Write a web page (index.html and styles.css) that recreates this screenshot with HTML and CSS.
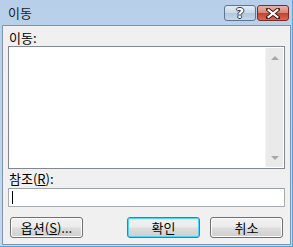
FILE: index.html
```html
<!DOCTYPE html>
<html>

<head>
    <meta charset="utf-8">
    <title>이동</title>
    <link rel="stylesheet" href="styles.css">
</head>

<body>
    <div class="window">
        <div class="titlebar">
            <span class="title">이동</span>
            <div class="caption-buttons">
                <div class="cap-btn help">?</div>
                <div class="cap-btn close">
                    <svg width="14" height="11" viewBox="0 0 14 11">
                        <path d="M2 1.5 L12 9.5 M12 1.5 L2 9.5" stroke="#4a1410" stroke-width="4" stroke-linecap="square" />
                        <path d="M2.6 2 L11.4 9 M11.4 2 L2.6 9" stroke="#ffffff" stroke-width="2.2" stroke-linecap="square" />
                    </svg>
                </div>
            </div>
        </div>
        <div class="client">
            <div class="label first">이동:</div>
            <div class="listbox">
                <div class="scrollbar">
                    <span class="arrow up"></span>
                    <span class="arrow down"></span>
                </div>
            </div>
            <div class="label">참조(<u>R</u>):</div>
            <div class="textbox"><span class="caret"></span></div>
            <div class="buttons">
                <button class="btn">옵션(<u>S</u>)...</button>
                <span class="spacer"></span>
                <button class="btn default">확인</button>
                <button class="btn">취소</button>
            </div>
        </div>
    </div>
</body>

</html>
```

FILE: styles.css
```css
html,
body {
    margin: 0;
    padding: 0;
}

body {
    font-family: "Noto Sans CJK KR", "Noto Sans", sans-serif;
    font-size: 13px;
    color: #000000;
}

.window {
    width: 293px;
    height: 247px;
    box-sizing: border-box;
    padding: 0 1px 1px 2px;
    border-right: 1px solid #4ea6d8;
    border-bottom: 1px solid #4ea6d8;
    background: linear-gradient(#b8cfe9, #c6d9ee);
    display: flex;
    flex-direction: column;
}

.titlebar {
    height: 25px;
    display: flex;
    align-items: flex-start;
}

.title {
    margin: 5px 0 0 6px;
    line-height: 16px;
    font-size: 13px;
    color: #1b1b1b;
}

.caption-buttons {
    margin: 5px 2px 0 auto;
    display: flex;
    gap: 1px;
}

.cap-btn {
    width: 30px;
    height: 14px;
    border: 1px solid #5d7591;
    border-radius: 3px;
    display: flex;
    align-items: center;
    justify-content: center;
}

.help {
    background: linear-gradient(#e4ecf5, #c9d7e8 50%, #b2c6dd 51%, #c4d6ea);
    font-family: "DejaVu Sans", sans-serif;
    font-weight: bold;
    font-size: 14px;
    line-height: 14px;
    color: #ffffff;
    text-shadow: 1px 0 0 #2b3a4e, -1px 0 0 #2b3a4e, 0 1px 0 #2b3a4e, 0 -1px 0 #2b3a4e;
}

.close {
    border-color: #7a2c24;
    background: linear-gradient(#eab2a6, #d88373 50%, #c7402f 51%, #d76a55);
}

.client {
    flex: 1;
    background-color: #f0f0f0;
    border: 1px solid #8094ad;
    padding: 0 5px;
    display: flex;
    flex-direction: column;
}

.label {
    height: 19px;
    line-height: 19px;
    padding-left: 1px;
    white-space: nowrap;
}

.label.first {
    height: 16px;
    line-height: 16px;
    padding-top: 4px;
}

.listbox {
    height: 123px;
    box-sizing: border-box;
    border: 1px solid #828790;
    background-color: #ffffff;
    display: flex;
    justify-content: flex-end;
    padding: 1px;
}

.scrollbar {
    width: 17px;
    background-color: #eaeaea;
    border-left: 1px solid #f4f4f4;
    display: flex;
    flex-direction: column;
    justify-content: space-between;
    align-items: center;
    padding: 8px 0 7px 0;
}

.arrow {
    width: 0;
    height: 0;
    border-left: 4px solid transparent;
    border-right: 4px solid transparent;
}

.arrow.up {
    border-bottom: 4px solid #a8a8a8;
}

.arrow.down {
    border-top: 4px solid #a8a8a8;
}

.textbox {
    height: 19px;
    box-sizing: border-box;
    border: 1px solid #a7abb2;
    border-top-color: #9aa0a8;
    background-color: #ffffff;
    padding: 2px 3px;
}

.caret {
    display: block;
    width: 1px;
    height: 13px;
    background-color: #000000;
}

.buttons {
    margin-top: 10px;
    padding: 0 2px;
    display: flex;
}

.spacer {
    flex: 1;
}

.btn {
    width: 73px;
    height: 21px;
    padding: 0;
    margin: 0;
    border: 1px solid #707070;
    border-radius: 3px;
    background: linear-gradient(#f2f2f2, #ebebeb 48%, #dddddd 52%, #cfcfcf);
    font-family: "Noto Sans CJK KR", "Noto Sans", sans-serif;
    font-size: 13px;
    line-height: 18px;
    color: #000000;
    box-shadow: inset 0 0 0 1px #fcfcfc;
}

.btn.default {
    border-color: #3c7fb1;
    box-shadow: inset 0 0 0 1px #48d6fb;
    margin-right: 10px;
}
```
